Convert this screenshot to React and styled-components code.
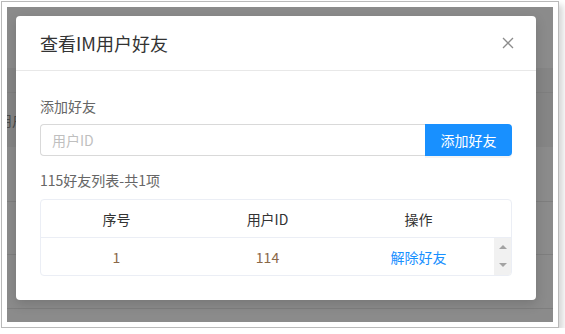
import React from 'react';
import styled, { createGlobalStyle } from 'styled-components';

const Global = createGlobalStyle`
  html, body { margin: 0; padding: 0; background: #fff; }
  body { font-family: "Noto Sans CJK SC", "Liberation Sans", sans-serif; }
  * { box-sizing: border-box; }
`;

const Frame = styled.div`
  margin: 1px 0 0 1px;
  width: fit-content;
  border: 1px solid #b9b9b9;
  padding: 5px;
  background: #fff;
  box-shadow: 4px 4px 6px rgba(0, 0, 0, 0.16);
`;

const Screen = styled.div`
  position: relative;
  width: 546px;
  height: 315px;
  overflow: hidden;
  background: #8b8b8b;
  display: flex;
  flex-direction: column;
`;

const BgRow = styled.div`
  flex: none;
  height: ${(p) => p.$h}px;
  background: ${(p) => (p.$band ? '#858585' : 'transparent')};
  border-bottom: ${(p) => (p.$line ? '1px solid #7e7e7e' : 'none')};
  display: flex;
  align-items: center;
`;

const BgText = styled.span`
  margin-left: -9px;
  font-size: 14px;
  color: #4a4a4a;
`;

const Modal = styled.div`
  position: absolute;
  left: 9px;
  top: 9px;
  width: 520px;
  background: #fff;
  border-radius: 4px;
  box-shadow: 0 4px 12px rgba(0, 0, 0, 0.15);
`;

const Header = styled.div`
  height: 55px;
  border-bottom: 1px solid #e8e8e8;
  padding: 0 22px 0 24px;
  display: flex;
  align-items: center;
  justify-content: space-between;
`;

const Title = styled.div`
  font-size: 18px;
  line-height: 24px;
  color: #333;
`;

const Close = styled.button`
  border: none;
  background: none;
  padding: 0;
  width: 12px;
  height: 12px;
  display: flex;
`;

const Body = styled.div`
  padding: 24px;
  display: flex;
  flex-direction: column;
`;

const Label = styled.div`
  font-size: 14px;
  line-height: 22px;
  color: #666;
  margin-top: ${(p) => p.$mt || 0}px;
`;

const InputGroup = styled.div`
  margin-top: 7px;
  display: flex;
  height: 32px;
`;

const Input = styled.input`
  flex: 1;
  min-width: 0;
  height: 32px;
  border: 1px solid #d9d9d9;
  border-right: none;
  border-radius: 4px 0 0 4px;
  padding: 0 11px;
  font-family: inherit;
  font-size: 14px;
  color: #333;
  outline: none;
  &::placeholder { color: #bfbfbf; }
`;

const Button = styled.button`
  width: 87px;
  height: 32px;
  border: none;
  border-radius: 0 4px 4px 0;
  background: #1890ff;
  color: #fff;
  font-family: inherit;
  font-size: 14px;
  padding: 0;
  box-shadow: 0 2px 0 rgba(0, 0, 0, 0.045);
`;

const Table = styled.div`
  margin-top: 8px;
  border: 1px solid #ebeef5;
  border-radius: 4px;
  overflow: hidden;
`;

const Row = styled.div`
  display: grid;
  grid-template-columns: 1fr 1fr 1fr 17px;
  height: ${(p) => p.$h}px;
  border-bottom: ${(p) => (p.$divider ? '1px solid #ebeef5' : 'none')};
  align-items: stretch;
`;

const Cell = styled.div`
  display: flex;
  align-items: center;
  justify-content: center;
  font-size: 14px;
  color: ${(p) => p.$color || '#333'};
  cursor: ${(p) => (p.$link ? 'pointer' : 'default')};
`;

const Scrollbar = styled.div`
  background: #f1f1f1;
  display: flex;
  flex-direction: column;
  align-items: center;
  justify-content: space-between;
  padding: 7px 0 8px;
`;

const Arrow = styled.div`
  width: 0;
  height: 0;
  border-left: 4px solid transparent;
  border-right: 4px solid transparent;
  ${(p) => (p.$up ? 'border-bottom: 4px solid #a3a3a3;' : 'border-top: 4px solid #a3a3a3;')}
`;

export default function App() {
  return (
    <>
      <Global />
      <Frame>
        <Screen>
          <BgRow $h={61} />
          <BgRow $h={25} $band $line />
          <BgRow $h={54} $band>
            <BgText>用户</BgText>
          </BgRow>
          <BgRow $h={55} $line />
          <BgRow $h={53} $line />
          <BgRow $h={54} $line />
          <Modal>
            <Header>
              <Title>查看IM用户好友</Title>
              <Close aria-label="关闭">
                <svg width="12" height="12" viewBox="0 0 12 12">
                  <path d="M1 1 L11 11 M11 1 L1 11" stroke="#8c8c8c" strokeWidth="1.3" fill="none" />
                </svg>
              </Close>
            </Header>
            <Body>
              <Label>添加好友</Label>
              <InputGroup>
                <Input placeholder="用户ID" />
                <Button>添加好友</Button>
              </InputGroup>
              <Label $mt={13}>115好友列表-共1项</Label>
              <Table>
                <Row $h={38} $divider>
                  <Cell>序号</Cell>
                  <Cell>用户ID</Cell>
                  <Cell>操作</Cell>
                  <div />
                </Row>
                <Row $h={37}>
                  <Cell $color="#8a6848">1</Cell>
                  <Cell $color="#8a6848">114</Cell>
                  <Cell $color="#1890ff" $link>解除好友</Cell>
                  <Scrollbar>
                    <Arrow $up />
                    <Arrow />
                  </Scrollbar>
                </Row>
              </Table>
            </Body>
          </Modal>
        </Screen>
      </Frame>
    </>
  );
}
